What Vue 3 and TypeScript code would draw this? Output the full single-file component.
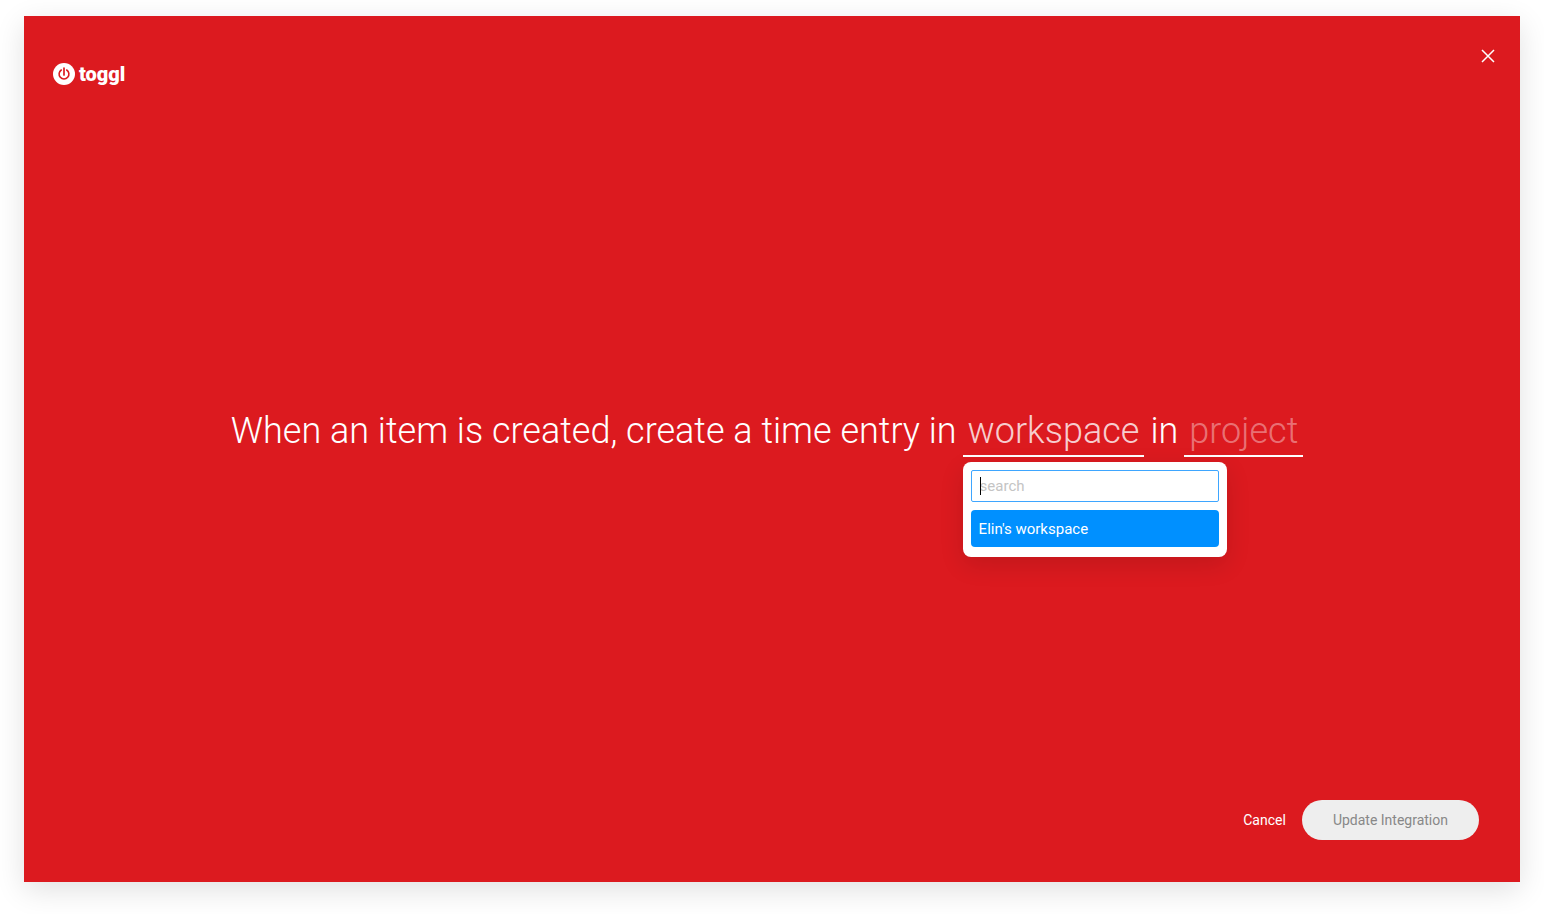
<script setup lang="ts">
import { computed, onMounted, ref } from 'vue'

const workspaces: string[] = ["Elin's workspace"]
const query = ref('')
const open = ref(true)
const searchBox = ref<HTMLInputElement | null>(null)

const matches = computed(() =>
  workspaces.filter((name) => name.toLowerCase().includes(query.value.toLowerCase())),
)

onMounted(() => searchBox.value?.focus())
</script>

<template>
  <div class="page">
    <main class="dialog">
      <header class="top">
        <div class="brand">
          <svg class="mark" viewBox="0 0 22 22" aria-hidden="true">
            <circle cx="11" cy="11" r="11" fill="#fff" />
            <path
              d="M8.3 7A4.9 4.9 0 1 0 13.7 7"
              fill="none"
              stroke="#dc1a1f"
              stroke-width="1.6"
              stroke-linecap="round"
            />
            <path d="M11 5V12" stroke="#dc1a1f" stroke-width="1.7" stroke-linecap="round" />
          </svg>
          <span class="name">toggl</span>
        </div>
        <button class="close" type="button" aria-label="Close">
          <svg viewBox="0 0 14 14" aria-hidden="true">
            <path d="M1 1L13 13M13 1L1 13" stroke="#fff" stroke-width="1.5" />
          </svg>
        </button>
      </header>

      <section class="recipe">
        <p class="sentence">
          <span>When an item is created, create a time entry in</span>
          <span class="slot">
            <button class="field active" type="button" :aria-expanded="open" @click="open = !open">
              workspace
            </button>
            <span v-if="open" class="menu">
              <span class="searchrow">
                <input
                  ref="searchBox"
                  v-model="query"
                  class="search"
                  type="text"
                  placeholder="search"
                  aria-label="Search workspaces"
                />
                <span v-if="!query" class="caret" aria-hidden="true"></span>
              </span>
              <button v-for="name in matches" :key="name" class="option" type="button">
                {{ name }}
              </button>
            </span>
          </span>
          <span>in</span>
          <button class="field" type="button">project</button>
        </p>
      </section>

      <footer class="actions">
        <button class="cancel" type="button">Cancel</button>
        <button class="update" type="button" disabled>Update Integration</button>
      </footer>
    </main>
  </div>
</template>

<style>
body {
  margin: 0;
  background: #fff;
}
</style>

<style scoped>
.page {
  box-sizing: border-box;
  min-height: 100vh;
  display: flex;
  padding: 16px 24px 32px;
  overflow: hidden;
  font-family: Roboto, 'Liberation Sans', sans-serif;
}

button,
input {
  box-sizing: border-box;
  margin: 0;
  border: 0;
  font: inherit;
}

button {
  padding: 0;
  background: none;
  color: inherit;
  cursor: pointer;
}

.dialog {
  flex: 1;
  display: flex;
  flex-direction: column;
  background: #dc1a1f;
  color: #fff;
  box-shadow: 0 8px 28px rgba(0, 0, 0, 0.12);
}

.top {
  display: flex;
  justify-content: space-between;
  align-items: flex-start;
  padding: 28px 20px 0 29px;
}

.brand {
  display: flex;
  align-items: center;
  gap: 4px;
  height: 60px;
}

.mark {
  width: 22px;
  height: 22px;
}

.name {
  font-size: 20px;
  font-weight: 900;
  line-height: 24px;
}

.close {
  display: flex;
  align-items: center;
  justify-content: center;
  width: 24px;
  height: 24px;
}

.close svg {
  width: 14px;
  height: 14px;
}

.recipe {
  flex: 1;
  display: flex;
  align-items: center;
  justify-content: center;
  padding: 0 10px 40px 0;
}

.sentence {
  display: flex;
  flex-wrap: wrap;
  align-items: flex-start;
  gap: 6px;
  margin: 0;
  font-size: 36px;
  font-weight: 300;
  line-height: 48px;
}

.slot {
  position: relative;
}

.field {
  display: block;
  padding: 0 5px;
  border-bottom: 2px solid #fff;
  color: rgba(255, 255, 255, 0.4);
}

.field.active {
  color: rgba(255, 255, 255, 0.8);
}

.menu {
  position: absolute;
  top: 100%;
  left: 0;
  z-index: 1;
  box-sizing: border-box;
  display: flex;
  flex-direction: column;
  gap: 8px;
  width: 264px;
  margin-top: 5px;
  padding: 8px 8px 10px;
  border-radius: 8px;
  background: #fff;
  box-shadow: 0 8px 24px rgba(0, 0, 0, 0.12);
  font-size: 15px;
  font-weight: 400;
  line-height: 20px;
}

.searchrow {
  position: relative;
  display: flex;
}

.search {
  width: 100%;
  height: 32px;
  padding: 0 8px;
  border: 1px solid #3ea6ff;
  border-radius: 2px;
  outline: none;
  background: #fff;
  color: #222;
}

.search:placeholder-shown {
  caret-color: transparent;
}

.search::placeholder {
  color: #c4c4c4;
  opacity: 1;
}

.caret {
  position: absolute;
  top: 7px;
  left: 9px;
  width: 1px;
  height: 18px;
  background: #000;
}

.option {
  width: 100%;
  height: 37px;
  padding: 0 8px;
  border-radius: 4px;
  background: #0090ff;
  color: #fff;
  text-align: left;
}

.actions {
  display: flex;
  justify-content: flex-end;
  align-items: center;
  gap: 16px;
  padding: 0 41px 42px;
  font-size: 14px;
  line-height: 20px;
}

.update {
  height: 40px;
  padding: 0 31px;
  border-radius: 20px;
  background: #eee;
  color: #888;
  cursor: default;
}
</style>
